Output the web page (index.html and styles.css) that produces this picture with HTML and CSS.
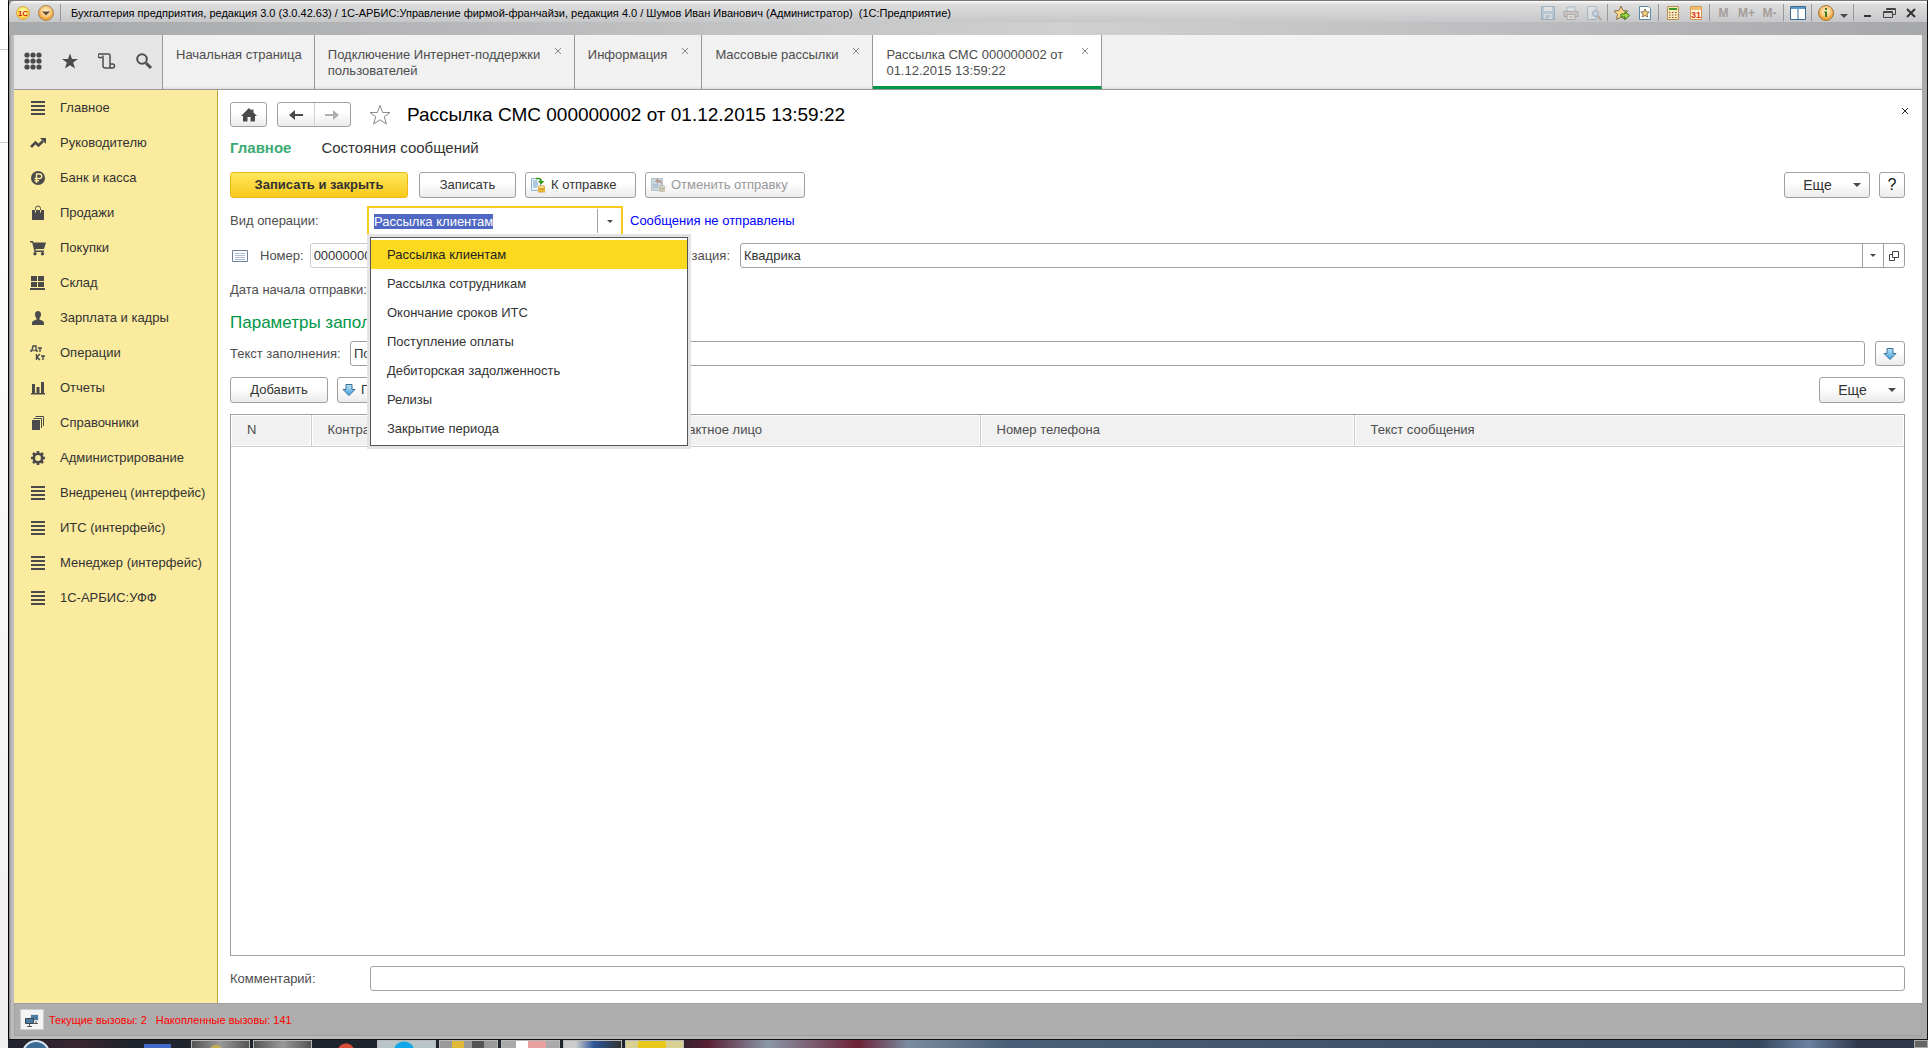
FILE: index.html
```html
<!DOCTYPE html>
<html lang="ru">
<head>
<meta charset="utf-8">
<title>Рассылка СМС 000000002 от 01.12.2015 13:59:22</title>
<link rel="stylesheet" href="styles.css">
</head>
<body>
<svg class="defs" aria-hidden="true">
  <defs>
    <linearGradient id="blue-arrow" x1="0" y1="0" x2="0" y2="1"><stop offset="0" stop-color="#bfe3f8"/><stop offset="1" stop-color="#3f9fdc"/></linearGradient>
    <radialGradient id="orange" cx="50%" cy="40%"><stop offset="0" stop-color="#fff3d0"/><stop offset=".6" stop-color="#fad08a"/><stop offset="1" stop-color="#f0a030"/></radialGradient>
    <radialGradient id="yellow" cx="50%" cy="40%"><stop offset="0" stop-color="#fffbc0"/><stop offset=".6" stop-color="#ffec70"/><stop offset="1" stop-color="#f8c840"/></radialGradient>
    <symbol id="i-list" viewBox="0 0 16 16"><path d="M1 1h14v2H1zM1 5h14v2H1zM1 9h14v2H1zM1 13h14v2H1z"/></symbol>
    <symbol id="i-down" viewBox="0 0 14 14"><path d="M4 1.500h6v5h3L7 12.500 1 6.500h3z" fill="url(#blue-arrow)" stroke="#3b6f98"/></symbol>
    <symbol id="i-close" viewBox="0 0 8 8"><path d="M1 1l6 6M7 1L1 7" fill="none" stroke="currentColor"/></symbol>
    <symbol id="i-caret" viewBox="0 0 8 4"><path d="M0 0h8L4 4z"/></symbol>
  </defs>
</svg>
<div class="desktop">
  <div class="behind"></div>
  <div class="window">
    <header class="titlebar">
      <svg class="logo" viewBox="0 0 14 14"><circle cx="7" cy="7" r="6.500" fill="url(#yellow)" stroke="#d8a850"/><text x="7" y="10" text-anchor="middle" class="logo-text">1С</text></svg>
      <svg class="menu-orb" viewBox="0 0 16 16"><circle cx="8" cy="8" r="7.500" fill="url(#orange)" stroke="#a88860"/><path d="M4 6.500h8L8 10.500z" fill="#5d4a38"/></svg>
      <span class="sep"></span>
      <h1 class="caption">Бухгалтерия предприятия, редакция 3.0 (3.0.42.63) / 1С-АРБИС:Управление фирмой-франчайзи, редакция 4.0 / Шумов Иван Иванович (Администратор)&nbsp; (1С:Предприятие)</h1>
      <div class="tools">
        <button class="tool faded" aria-label="Сохранить"><svg viewBox="0 0 16 16"><path d="M1.500 1.500h13v13h-13z" fill="#9fb9cc" stroke="#6a91ad"/><path d="M4 2h8v4H4zM4 9h8v5H4z" fill="#e4ecf1"/><path d="M5 11h6M5 13h4" stroke="#6a91ad"/></svg></button>
        <button class="tool faded" aria-label="Печать"><svg viewBox="0 0 16 16"><path d="M4 2h8v5H4z" fill="#dfe8ee" stroke="#7c99ad"/><path d="M1 6.500h14v5H1z" fill="#c3b8b0" stroke="#8d8784"/><path d="M4 9.500h8v5H4z" fill="#eee" stroke="#8d8784"/><path d="M6 12h4" stroke="#b08060"/></svg></button>
        <button class="tool faded" aria-label="Просмотр"><svg viewBox="0 0 16 16"><path d="M1.500 1.500h9v13h-9z" fill="#dfe8ee" stroke="#7c99ad"/><circle cx="9.500" cy="8.500" r="3" fill="#b8d0e4" stroke="#6d87a0"/><path d="M12 11l3 4" stroke="#a07860" stroke-width="2"/></svg></button>
        <span class="sep"></span>
        <button class="tool" aria-label="Добавить в избранное"><svg viewBox="0 0 16 16"><path d="M7 1l2 4.500 5 .500-4 3.500 1 5L7 12l-4.500 2.500 1.200-5L0 6l5-.500z" fill="#fbd88a" stroke="#8a6f48"/><path d="M7 9h4V6.500l4.500 4-4.500 4V12H7z" fill="#a8d850" stroke="#2c7a12"/></svg></button>
        <button class="tool" aria-label="Избранное"><svg viewBox="0 0 16 16"><path d="M2.500 1.500h9l2 2v11h-11z" fill="#fff" stroke="#5c88a8"/><path d="M8 4l1.200 2.800 3 .200-2.300 2 .8 3L8 10.500 5.300 12l.8-3-2.300-2 3-.200z" fill="#f9d27c" stroke="#6a5a40" stroke-width=".8"/></svg></button>
        <span class="sep"></span>
        <button class="tool" aria-label="Калькулятор"><svg viewBox="0 0 16 16"><path d="M2.500 1.500h11v13h-11z" fill="#fde8b8" stroke="#b89058"/><path d="M4 3h8v2H4z" fill="#3c9a28"/><path d="M4 7.500h8M4 10h8M4 12.500h8" stroke="#7a5840" stroke-dasharray="1.500 1.500"/></svg></button>
        <button class="tool" aria-label="Календарь"><svg viewBox="0 0 16 16"><path d="M2.500 1.500h11v13h-11z" fill="#fff3d8" stroke="#d09850"/><path d="M3 2h10v3H3z" fill="#f4c070"/><text x="8" y="13" text-anchor="middle" class="cal-text">31</text></svg></button>
        <span class="sep"></span>
        <button class="tool mem">M</button>
        <button class="tool mem">M+</button>
        <button class="tool mem">M-</button>
        <span class="sep"></span>
        <button class="tool" aria-label="Панели"><svg viewBox="0 0 16 16"><path d="M.500 1.500h15v13H.500z" fill="#fff" stroke="#3a6a94"/><path d="M1 2h14v2H1z" fill="#5b9ac9"/><path d="M8 4v10.500" stroke="#3a6a94"/></svg></button>
        <span class="sep"></span>
        <button class="tool" aria-label="Справка"><svg viewBox="0 0 16 16"><circle cx="8" cy="8" r="7.500" fill="url(#orange)" stroke="#a07840"/><path d="M7 3h2v2H7zM6 6.500h3V12H7V7.500H6z" fill="#3e7a14"/></svg></button>
        <button class="tool narrow" aria-label="Ещё"><svg class="caret" viewBox="0 0 8 4"><use href="#i-caret"/></svg></button>
        <span class="sep"></span>
        <button class="tool win" aria-label="Свернуть"><svg viewBox="0 0 16 16"><path d="M5 10h7v2H5z" fill="#333"/></svg></button>
        <button class="tool win" aria-label="Восстановить"><svg viewBox="0 0 16 16"><path d="M5.500 5V3.500h9v6H12M2.500 6.500h9v6h-9zM2.500 7.500h9M5.500 4.500h9" fill="none" stroke="#444"/></svg></button>
        <button class="tool win" aria-label="Закрыть"><svg viewBox="0 0 16 16"><path d="M4 4l8 8M12 4l-8 8" stroke="#333" stroke-width="2"/></svg></button>
      </div>
    </header>

    <nav class="tabs">
      <div class="quick">
        <button aria-label="Меню"><svg viewBox="0 0 18 18"><g><circle cx="3" cy="3" r="2.600"/><circle cx="9" cy="3" r="2.600"/><circle cx="15" cy="3" r="2.600"/><circle cx="3" cy="9" r="2.600"/><circle cx="9" cy="9" r="2.600"/><circle cx="15" cy="9" r="2.600"/><circle cx="3" cy="15" r="2.600"/><circle cx="9" cy="15" r="2.600"/><circle cx="15" cy="15" r="2.600"/></g></svg></button>
        <button aria-label="Избранное"><svg viewBox="0 0 18 18"><path d="M9 1.500l2 5.500h6l-4.800 3.600 1.800 6L9 13.200 4 16.600l1.800-6L1 7h6z"/></svg></button>
        <button aria-label="История"><svg viewBox="0 0 18 18"><path d="M4 5.500H3a2 2 0 1 1 0-3.500h7.500c1 0 1.500.500 1.500 1.500v8.500h2.500a1.800 1.800 0 1 1 0 4H7.500C6 16 5 15.500 5 14V3.500M12 12v2c0 1.500.800 2 1.800 2" fill="none" stroke="#4d4d4d" stroke-width="1.500"/></svg></button>
        <button aria-label="Поиск"><svg viewBox="0 0 18 18"><circle cx="7" cy="7" r="4.800" fill="none" stroke="#4d4d4d" stroke-width="2"/><path d="M11 11l5 5" stroke="#4d4d4d" stroke-width="3"/></svg></button>
      </div>
      <a class="tab" href="#home"><span>Начальная страница</span></a>
      <a class="tab tab-long" href="#support"><span>Подключение Интернет-поддержки пользователей</span><svg class="x"><use href="#i-close"/></svg></a>
      <a class="tab" href="#info"><span>Информация</span><svg class="x"><use href="#i-close"/></svg></a>
      <a class="tab" href="#mass"><span>Массовые рассылки</span><svg class="x"><use href="#i-close"/></svg></a>
      <a class="tab tab-doc active" href="#doc"><span>Рассылка СМС 000000002 от 01.12.2015 13:59:22</span><svg class="x"><use href="#i-close"/></svg></a>
    </nav>

    <div class="work">
      <aside class="sidebar">
        <a href="#s1"><svg viewBox="0 0 16 16"><use href="#i-list"/></svg>Главное</a>
        <a href="#s2"><svg viewBox="0 0 16 16"><path d="M1 12l4.500-4.500 3 3L13 6" fill="none" stroke="#4a4a4a" stroke-width="2.600"/><path d="M10 3h6v6z"/></svg>Руководителю</a>
        <a href="#s3"><svg viewBox="0 0 16 16"><circle cx="8" cy="8" r="7"/><path d="M6.500 13V4h3a2.200 2.200 0 0 1 0 4.500H4.500M4.500 10.800H9" fill="none" stroke="#fbeb9e" stroke-width="1.400"/></svg>Банк и касса</a>
        <a href="#s4"><svg viewBox="0 0 16 16"><path d="M2 5h12v10H2z"/><path d="M5.500 8V3.500a2.500 2.500 0 0 1 5 0V8" fill="none" stroke="#4a4a4a"/><path d="M5.500 5v2.500M10.500 5v2.500" stroke="#fbeb9e"/></svg>Продажи</a>
        <a href="#s5"><svg viewBox="0 0 16 16"><path d="M0 1h3l.5 1.500H16L14 9H5.500l.3 1.500H14V12H4.500L2.200 2.500H0z"/><circle cx="5" cy="13.700" r="1.700"/><circle cx="12.500" cy="13.700" r="1.700"/></svg>Покупки</a>
        <a href="#s6"><svg viewBox="0 0 16 16"><path d="M1 1h6v5H1zM8 1h6v5H8zM1 7h6v5H1zM8 7h6v5H8zM0 13h15v2H0z"/></svg>Склад</a>
        <a href="#s7"><svg viewBox="0 0 16 16"><path d="M8 1c2 0 3 1.300 3 3.200C11 6 10.300 7.500 9.500 8v1.500L13 11c.8.400 1 1.200 1 4H2c0-2.800.2-3.600 1-4l3.500-1.500V8C5.700 7.500 5 6 5 4.200 5 2.300 6 1 8 1z"/></svg>Зарплата и кадры</a>
        <a href="#s8"><svg viewBox="0 0 16 16"><path d="M1 7V5.500h1L3 1h3v4.500h1V7M3.300 5.500h1.500M8 3h4M10 3v4M6.500 9v6M10 9L7 12l3 3M11 11h4M13 11v4" fill="none" stroke="#4a4a4a" stroke-width="1.400"/></svg>Операции</a>
        <a href="#s9"><svg viewBox="0 0 16 16"><path d="M1 13h14v1.500H1zM2 4h3v9H2zM6.500 7h3v6h-3zM11 2h3v11h-3z"/></svg>Отчеты</a>
        <a href="#s10"><svg viewBox="0 0 16 16"><path d="M2 5h8v10H2z"/><path d="M3.500 3.500h8V13M5.500 1.500h8V11" fill="none" stroke="#4a4a4a"/></svg>Справочники</a>
        <a href="#s11"><svg viewBox="0 0 16 16"><circle cx="8" cy="8" r="4.200" fill="none" stroke="#4a4a4a" stroke-width="2.600"/><path d="M8 1v2.500M8 12.500V15M1 8h2.500M12.500 8H15M3 3l2 2M11 11l2 2M13 3l-2 2M5 11l-2 2" stroke="#4a4a4a" stroke-width="2.600"/></svg>Администрирование</a>
        <a href="#s12"><svg viewBox="0 0 16 16"><use href="#i-list"/></svg>Внедренец (интерфейс)</a>
        <a href="#s13"><svg viewBox="0 0 16 16"><use href="#i-list"/></svg>ИТС (интерфейс)</a>
        <a href="#s14"><svg viewBox="0 0 16 16"><use href="#i-list"/></svg>Менеджер (интерфейс)</a>
        <a href="#s15"><svg viewBox="0 0 16 16"><use href="#i-list"/></svg>1С-АРБИС:УФФ</a>
      </aside>

      <main class="form">
        <div class="head">
          <button class="btn nav-btn" aria-label="Домой"><svg viewBox="0 0 16 14"><path d="M8 0l2.500 2.500V1.500h2v3L16 8h-2v5.500H9.500V9h-3v4.500H2V8H0z"/></svg></button>
          <div class="nav-pair">
            <button aria-label="Назад"><svg viewBox="0 0 16 14"><path d="M1 7l6-5v4h8v2H7v4z"/></svg></button>
            <button aria-label="Вперед" disabled><svg viewBox="0 0 16 14"><path d="M15 7L9 2v4H1v2h8v4z" fill="#b0b0b0"/></svg></button>
          </div>
          <svg class="fav" viewBox="0 0 22 22"><path d="M11 1.500l2.700 7H21l-5.800 4.300 2.200 7.200L11 15.800 4.600 20l2.200-7.200L1 8.500h7.300z" fill="#fff" stroke="#8a8a8a"/></svg>
          <h2>Рассылка СМС 000000002 от 01.12.2015 13:59:22</h2>
          <button class="form-close" aria-label="Закрыть"><svg viewBox="0 0 8 8"><use href="#i-close"/></svg></button>
        </div>
        <nav class="sections"><a class="current" href="#main">Главное</a><a href="#states">Состояния сообщений</a></nav>

        <div class="commands">
          <button class="btn primary">Записать и закрыть</button>
          <button class="btn save">Записать</button>
          <button class="btn icon send"><svg viewBox="0 0 16 16"><path d="M1.500 1.500h9v12h-9z" fill="#eef6fc" stroke="#8fb0cc"/><path d="M3 4h4M3 6h5M3 8h5M3 10h4" stroke="#6f9cc4"/><path d="M6 1c4-1 6 .500 6 3h2.500L11 7.500 8 4h2C10 2.500 9 2 6 2.500z" fill="#3a9a20"/><path d="M8 10h7v5H8z" fill="#f6c23c"/><ellipse cx="11.500" cy="10" rx="3.500" ry="1.500" fill="#fce08c" stroke="#c08820" stroke-width=".6"/><path d="M8 12.500h7M8 15h7" stroke="#c08820" stroke-width=".7"/></svg>К отправке</button>
          <button class="btn icon cancel" disabled><svg viewBox="0 0 16 16"><path d="M1.500 1.500h11v12h-11z" fill="#c9d6de" stroke="#b4c2cc"/><path d="M3 8h5M3 10h5" stroke="#98b0c0"/><path d="M5 4l3-3v2c4 0 4 2 4 5-1-2-2-3-4-3v2z" fill="#b89a94"/><path d="M9 10h6v5H9z" fill="#cbc6b4"/><ellipse cx="12" cy="10" rx="3" ry="1.300" fill="#dcd8c8" stroke="#aaa590" stroke-width=".6"/></svg>Отменить отправку</button>
          <button class="btn more push">Еще<svg class="caret" viewBox="0 0 8 4"><use href="#i-caret"/></svg></button>
          <button class="btn help">?</button>
        </div>

        <div class="row operation">
          <label class="wide" for="op">Вид операции:</label>
          <div class="combo">
            <input id="op" type="text" role="combobox" aria-expanded="true" aria-controls="op-list" value="Рассылка клиентам">
            <button aria-label="Открыть список"><svg class="caret small" viewBox="0 0 8 4"><use href="#i-caret"/></svg></button>
            <ul class="popup" id="op-list" role="listbox">
              <li role="option" aria-selected="true">Рассылка клиентам</li>
              <li role="option">Рассылка сотрудникам</li>
              <li role="option">Окончание сроков ИТС</li>
              <li role="option">Поступление оплаты</li>
              <li role="option">Дебиторская задолженность</li>
              <li role="option">Релизы</li>
              <li role="option">Закрытие периода</li>
            </ul>
          </div>
          <a class="status" href="#sent">Сообщения не отправлены</a>
        </div>

        <div class="row document">
          <div class="number">
            <svg class="doc" viewBox="0 0 16 12"><path d="M.500.500h15v11H.500z" fill="#fff" stroke="#6b8296"/><path d="M3 3.500h10M3 5.500h10M3 7.500h10M3 9.500h10" stroke="#a9c0d4"/></svg>
            <label for="num">Номер:</label>
            <input id="num" class="field muted" type="text" value="000000002">
            <label class="push" for="org">Организация:</label>
          </div>
          <div class="field group">
            <select id="org"><option>Квадрика</option></select>
            <span class="part"><svg class="caret small" viewBox="0 0 8 4"><use href="#i-caret"/></svg></span>
            <button class="part" aria-label="Открыть"><svg class="open" viewBox="0 0 10 10"><path d="M3.500.500h6v6h-6zM3 3.500H.500v6h5V7" fill="none" stroke="#444"/></svg></button>
          </div>
        </div>

        <div class="row"><label for="start">Дата начала отправки:</label><input id="start" class="field date" type="text"></div>
        <h3>Параметры запол</h3>
        <div class="row filling">
          <label for="tpl">Текст заполнения:</label>
          <input id="tpl" class="field grow" type="text" value="По">
          <button class="btn square" aria-label="Заполнить"><svg class="down" viewBox="0 0 14 14"><use href="#i-down"/></svg></button>
        </div>

        <div class="commands table-commands">
          <button class="btn add">Добавить</button>
          <button class="btn icon pick"><svg class="down" viewBox="0 0 14 14"><use href="#i-down"/></svg>П</button>
          <button class="btn more push">Еще<svg class="caret" viewBox="0 0 8 4"><use href="#i-caret"/></svg></button>
        </div>

        <div class="grid">
          <table>
            <colgroup><col class="c-num"><col class="c-party"><col class="c-person"><col class="c-phone"><col></colgroup>
            <thead><tr><th>N</th><th>Контра</th><th>Контактное лицо</th><th>Номер телефона</th><th>Текст сообщения</th></tr></thead>
          </table>
        </div>

        <div class="row comment"><label for="cmt">Комментарий:</label><input id="cmt" class="field grow" type="text"></div>
      </main>
    </div>

    <footer class="statusbar">
      <button aria-label="Соединение"><svg viewBox="0 0 16 16"><path d="M6.500 2.500h8v6h-8z" fill="#4b7ba0" stroke="#dde3e8"/><path d="M1.500 6.500h8v5h-8z" fill="#4b7ba0" stroke="#38444e"/><path d="M5.500 12v2M3 14.500h5M12 9v2M10 11.500h4" stroke="#555"/></svg></button>
      <span>Текущие вызовы: 2</span><span>Накопленные вызовы: 141</span>
    </footer>
  </div>
  <div class="taskbar">
    <span class="orb"></span><span class="quick-app"></span>
    <span class="task t-folder"></span><span class="task"></span><span class="task dark"></span><span class="task t-sky"></span><span class="task t-mix"></span><span class="task t-pink"></span><span class="task t-word"></span><span class="task t-one"></span>
    <span class="show-desktop"></span>
  </div>
</div>
<script>
  // The operation list opens with the current value selected for overtyping.
  const op = document.getElementById('op');
  op.focus();
  op.select();
</script>
</body>
</html>
```

FILE: styles.css
```css
* { box-sizing: border-box; }
body { margin: 0; font: 13px/16px "Liberation Sans", Arial, sans-serif; color: #4d4d4d; }
button, input, select { font: inherit; color: #333; margin: 0; }
button { padding: 0; border: 0; background: none; display: flex; align-items: center; justify-content: center; }
a { color: inherit; text-decoration: none; }
h1, h2, h3, ul { margin: 0; padding: 0; font-weight: normal; }
svg { flex: none; fill: #4a4a4a; }
.defs { position: absolute; width: 0; height: 0; }

.desktop { display: grid; grid-template: minmax(0, 1fr) 8px / 8px minmax(0, 1fr); height: 100vh; min-height: 640px; overflow: hidden; }
.behind { grid-row: 1 / 3; background: linear-gradient(#fff 49px, #ccc 49px 50px, #fff 50px 142px, #ccc 142px 143px, #fdfdfd 143px, #f0f0f0); }
.window { display: flex; flex-direction: column; min-width: 0; padding: 0 5px 3px; border: 1px solid #111; border-top-color: #777; border-left-color: #000; background: linear-gradient(90deg, #8f8f8f 1px, #bcbcbc 2px 5px, #aaa); }

.titlebar { display: flex; align-items: flex-start; height: 34px; margin: 0 -5px; padding: 3px 5px 0 6px; border-radius: 6px 0 0 0; background: linear-gradient(#fff 0, #dedede 3px, #c6c7c9 21px, transparent 21px), linear-gradient(90deg, #a9aaac, #b0b1b3 15%, #d0d0d0 55%, #c0c0c2 75%, #a6a7aa); }
.logo { width: 14px; height: 14px; margin: 2px 8px 0 1px; }
.logo-text { font: bold 8px "Liberation Sans", sans-serif; fill: #d41e10; }
.cal-text { font: bold 9px "Liberation Sans", sans-serif; fill: #e03818; }
.menu-orb { width: 16px; height: 16px; margin: 1px 4px 0 0; }
.sep { width: 1px; height: 17px; margin: 0 2px; background: #98989a; }
.caption { flex: 1; margin-left: 8px; font-size: 11px; line-height: 18px; color: #000; white-space: nowrap; overflow: hidden; }
.tools { display: flex; }
.tool { width: 23px; height: 18px; }
.tool > svg { width: 16px; height: 16px; }
.tool.narrow { width: 14px; padding-top: 6px; }
.tool > .caret { width: 8px; height: 4px; }
.tool.win { width: 22px; }
.faded { opacity: .5; }
.mem { font-size: 12px; font-weight: bold; color: #a59c98; }

.tabs { display: flex; height: 55px; border-bottom: 1px solid #999; background: linear-gradient(#f1f1f1 51px, #ddd); }
.quick { display: flex; border-right: 1px solid #999; background: #e5e5e5; }
.quick button { width: 37px; padding-bottom: 2px; }
.quick svg { width: 18px; height: 18px; }
.tab { display: flex; justify-content: space-between; gap: 14px; padding: 12px 12px 0 13px; border-right: 1px solid #999; }
.tab-long { width: 260px; gap: 4px; }
.tab-doc { width: 229px; gap: 8px; }
.tab.active { border-bottom: 3px solid #009646; background: #fff; }
.x { width: 8px; height: 8px; color: #888; }

.work { display: flex; flex: 1; min-height: 0; }
.sidebar { width: 204px; flex: none; background: #fbeb9e; border-right: 1px solid #b8a630; }
.sidebar a { display: flex; align-items: center; gap: 14px; height: 35px; padding-left: 16px; color: #333; }
.sidebar svg { width: 16px; height: 16px; }

.form { display: flex; flex-direction: column; flex: 1; min-width: 0; padding: 12px 17px 12px 12px; background: #fff; }
.btn { height: 26px; border: 1px solid #a0a0a0; border-radius: 3px; background: linear-gradient(#fff 40%, #ebebeb); }
.head { display: flex; align-items: center; height: 25px; }
.nav-btn { width: 37px; height: 25px; margin-right: 10px; }
.head button svg { width: 16px; height: 14px; }
.nav-pair { display: flex; width: 74px; height: 25px; border: 1px solid #a0a0a0; border-radius: 3px; background: linear-gradient(#fff 40%, #ebebeb); }
.nav-pair button { flex: 1; }
.nav-pair button + button { border-left: 1px solid #d0d0d0; }
.fav { width: 22px; height: 22px; margin: 0 16px 0 18px; }
h2 { flex: 1; font-size: 19px; line-height: 24px; color: #000; }
.head .form-close { align-self: flex-start; width: 8px; padding-top: 5px; margin-right: -4px; color: #333; }
.head .form-close svg { width: 8px; height: 8px; }
.sections { display: flex; gap: 30px; height: 45px; padding-top: 12px; font-size: 15px; line-height: 18px; color: #333; }
.current { font-weight: bold; color: #3bab74; }

.commands { display: flex; height: 26px; }
.push { margin-left: auto; }
.primary { width: 178px; margin-right: 11px; border-color: #efb91c; background: linear-gradient(#ffe85c, #f8c91c); font-weight: bold; }
.save { width: 97px; margin-right: 9px; }
.icon { justify-content: flex-start; gap: 5px; padding-left: 4px; }
.icon > svg { width: 16px; height: 16px; }
.send { width: 111px; margin-right: 9px; }
.cancel { width: 160px; color: #999; }
.more { width: 86px; gap: 21px; padding-left: 10px; font-size: 14px; }
.caret { width: 8px; height: 4px; }
.caret.small { width: 6px; height: 3px; }
.help { width: 26px; margin-left: 9px; font-size: 16px; color: #111; }

.row { display: flex; align-items: center; height: 35px; }
.wide { width: 137px; }
.operation { height: 29px; margin-top: 8px; }
.combo { position: relative; display: flex; width: 256px; height: 32px; align-self: flex-start; padding: 1px 0; border: 2px solid #f9cb1e; }
.combo input { flex: 1; min-width: 0; height: 24px; padding: 0 5px; border: 0; outline: 0; background: none; }
.combo input::selection { background: #4f68c4; color: #fff; }
.combo > button { width: 24px; height: 24px; border-left: 1px solid #a0a0a0; }
.popup { position: absolute; z-index: 2; top: 29px; left: 1px; width: 318px; padding: 2px 0; border: 1px solid #555; background: #fff; box-shadow: 0 0 0 3px #e3e3e3; list-style: none; color: #333; }
.popup li { height: 29px; padding-left: 16px; line-height: 29px; }
.popup li[aria-selected] { background: #fbd91f; color: #222; }
.status { margin-left: 7px; color: #00f; }

.field { height: 25px; padding: 0 3px; border: 1px solid #a0a0a0; border-radius: 3px; background: #fff; outline: 0; }
.document { height: 25px; margin-top: 8px; }
.number { display: flex; align-items: center; width: 500px; margin-right: 10px; }
.doc { width: 16px; height: 12px; margin: 0 12px 0 2px; }
.muted { width: 120px; margin-left: 6px; border-color: #ccc; }
.group { display: flex; flex: 1; padding: 0; }
.group select { flex: 1; padding: 0 3px; border: 0; background: none; appearance: none; outline: 0; }
.part { display: flex; align-items: center; justify-content: center; width: 21px; border-left: 1px solid #a0a0a0; }
.open { width: 10px; height: 10px; }
.document + .row { margin-top: 4px; }
.date { width: 100px; margin-left: 8px; }
h3 { margin-top: 6px; font-size: 17px; line-height: 20px; color: #009646; }
.filling { height: 25px; margin-top: 8px; }
.filling label { width: 120px; }
.grow { flex: 1; min-width: 0; }
.square { width: 30px; height: 25px; margin-left: 10px; }
.down { width: 14px; height: 14px; }
.icon > .down { width: 14px; height: 14px; }
.table-commands { margin-top: 11px; }
.add { width: 98px; margin-right: 9px; }
.pick { width: 110px; }

.grid { flex: 1; min-height: 0; margin-top: 11px; border: 1px solid #a0a0a0; }
table { width: 100%; table-layout: fixed; border-collapse: collapse; }
th { height: 31px; padding: 0 0 0 16px; border-right: 1px solid #ccc; border-bottom: 1px solid #ccc; background: #f1f1f1; box-shadow: inset 0 0 0 1px #fff; font-weight: normal; text-align: left; }
th:last-child { border-right: 0; }
.c-num { width: 80px; }
.c-party { width: 333px; }
.c-person { width: 336px; }
.c-phone { width: 374px; }
.comment { height: 25px; margin-top: 10px; }
.comment label { width: 140px; }

.statusbar { display: flex; align-items: center; gap: 9px; height: 33px; padding: 0 5px; border: 1px solid #a0a0a0; background: #aeaeae; font-size: 11px; color: #f00; }
.statusbar button { width: 24px; height: 21px; margin-right: -4px; border: 1px solid #ccc; background: #f4f4f4; }
.statusbar svg { width: 16px; height: 16px; }

.taskbar { display: flex; gap: 3px; padding-left: 14px; overflow: hidden; background: linear-gradient(90deg, #20242e, #3a2530 70px, #20242c 120px 660px, #5a2034 700px, #8a98a8 760px, #6c2036 850px, #7a8ca0 900px, #4a6078 1000px, #34465c 1750px, #6a82a0 1800px, #30384c 1850px); }
.orb { width: 28px; height: 28px; margin-right: 91px; border: 2px solid #d8e4ee; border-radius: 50%; background: #3c6c94; }
.quick-app { width: 27px; margin: 4px 17px 0 0; background: #4468c8; }
.task { width: 59px; border: 1px solid #b8b8b8; border-bottom: 0; background: linear-gradient(90deg, #555, #999, #555); }
.task.dark { border-color: transparent; background: radial-gradient(circle at 30px 11px, #d84c38 8px, transparent 9px) no-repeat; }
.t-folder { background: radial-gradient(circle at 24px 11px, #c8b050 6px, transparent 8px), linear-gradient(90deg, #555, #999, #555); }
.t-sky { background: radial-gradient(circle at 26px 11px, #10a8e8 10px, #b8c4c8 11px); }
.t-mix { background: linear-gradient(90deg, #999 12px, #e0b838 12px 24px, #999 24px 32px, #555 32px 44px, #999 44px); }
.t-pink { background: linear-gradient(90deg, #aaa 14px, #fff 14px 26px, #e8a0a0 26px 44px, #aaa 44px); }
.t-word { background: linear-gradient(90deg, #ccc 12px, #2c5498 30px, #333); }
.t-one { background: linear-gradient(90deg, #d8d090 12px, #e8c818 12px 40px, #d8d090 40px); }
.show-desktop { width: 14px; margin-left: auto; border: 1px solid #aaa; background: #666; }
```
